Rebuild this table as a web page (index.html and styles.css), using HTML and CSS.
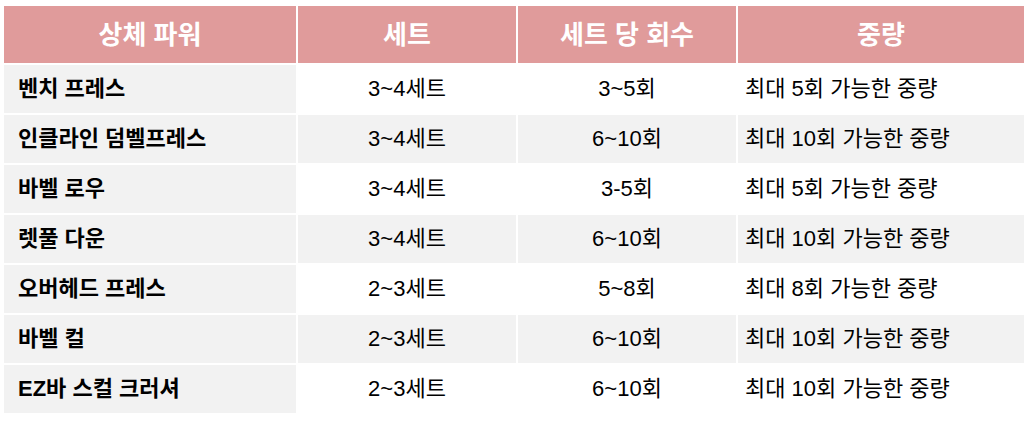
FILE: index.html
```html
<!DOCTYPE html>
<html lang="ko">
<head>
<meta charset="utf-8">
<link rel="stylesheet" href="styles.css">
</head>
<body>
<table class="plan">
  <colgroup>
    <col class="c1"><col class="c2"><col class="c3"><col class="c4">
  </colgroup>
  <thead>
    <tr><th>상체 파워</th><th>세트</th><th>세트 당 회수</th><th>중량</th></tr>
  </thead>
  <tbody>
    <tr><td class="name">벤치 프레스</td><td class="mid">3~4세트</td><td class="mid">3~5회</td><td class="w">최대 5회 가능한 중량</td></tr>
    <tr><td class="name">인클라인 덤벨프레스</td><td class="mid">3~4세트</td><td class="mid">6~10회</td><td class="w">최대 10회 가능한 중량</td></tr>
    <tr><td class="name">바벨 로우</td><td class="mid">3~4세트</td><td class="mid">3-5회</td><td class="w">최대 5회 가능한 중량</td></tr>
    <tr><td class="name">렛풀 다운</td><td class="mid">3~4세트</td><td class="mid">6~10회</td><td class="w">최대 10회 가능한 중량</td></tr>
    <tr><td class="name">오버헤드 프레스</td><td class="mid">2~3세트</td><td class="mid">5~8회</td><td class="w">최대 8회 가능한 중량</td></tr>
    <tr><td class="name">바벨 컬</td><td class="mid">2~3세트</td><td class="mid">6~10회</td><td class="w">최대 10회 가능한 중량</td></tr>
    <tr><td class="name">EZ바 스컬 크러셔</td><td class="mid">2~3세트</td><td class="mid">6~10회</td><td class="w">최대 10회 가능한 중량</td></tr>
  </tbody>
</table>
</body>
</html>
```
FILE: styles.css
```css
html, body {
  margin: 0;
  padding: 0;
  background: #ffffff;
}
body {
  font-family: "Liberation Sans", "Noto Sans CJK KR", sans-serif;
  color: #000000;
}
.plan {
  margin: 4px 2px;
  width: 1024px;
  border-collapse: separate;
  border-spacing: 2px;
  table-layout: fixed;
}
.c1 { width: 292px; }
.c2 { width: 218px; }
.c3 { width: 218px; }
.c4 { width: 286px; }
.plan th {
  height: 57px;
  padding: 0;
  background: #e09b9b;
  color: #ffffff;
  font-size: 26px;
  line-height: 30px;
  font-weight: 700;
  text-align: center;
  vertical-align: middle;
}
.plan td {
  height: 48px;
  padding: 0;
  font-size: 22px;
  line-height: 26px;
  vertical-align: middle;
  background: #ffffff;
}
.plan tbody tr:nth-child(even) td {
  background: #f2f2f2;
}
.plan td.name {
  background: #f2f2f2;
  font-weight: 700;
  padding-left: 14px;
  text-align: left;
}
.plan td.mid {
  text-align: center;
}
.plan td.w {
  padding-left: 7px;
  text-align: left;
}
```
